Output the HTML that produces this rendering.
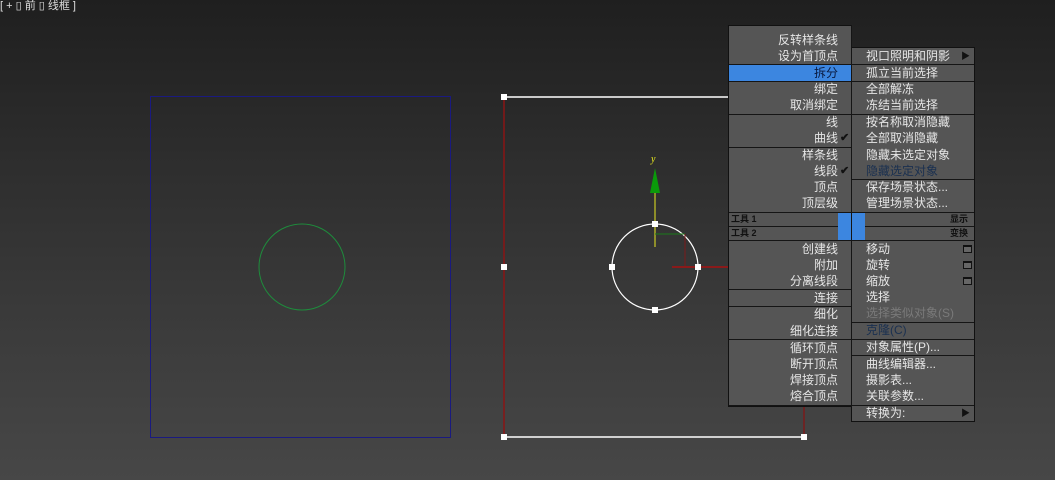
<!DOCTYPE html>
<html><head><meta charset="utf-8"><style>
*{margin:0;padding:0;box-sizing:border-box}
body{width:1055px;height:480px;overflow:hidden;position:relative;background:linear-gradient(#1f1f1f,#2c2c2c 30%,#3a3a3a 65%,#474747);font-family:"Liberation Sans","Noto Sans CJK SC",sans-serif;}
.t{position:absolute;font-size:12px;line-height:16px;color:#e6e6e6;white-space:nowrap}
.l{right:217px;text-align:right}
.r{left:866px}
.p{position:absolute;background:#555;border:1px solid #111}
.s{position:absolute;height:1px;background:#151515}
.hl{position:absolute;background:#3c86e0}
.ck{position:absolute;left:840px;font-size:11px;color:#111;font-weight:bold}
.bx{position:absolute;left:963px;width:9px;height:8px;border:1px solid #111;border-top-width:2px;background:#666}
</style></head><body>
<div class="t" style="left:0;top:-2px;font-size:11px;color:#ddd">[ + ▯ 前 ▯ 线框 ]</div>
<svg width="1055" height="480" style="position:absolute;left:0;top:0">
<rect x="150.5" y="96.5" width="300" height="341" fill="none" stroke="#1a1a80"/>
<circle cx="302" cy="267" r="43" fill="none" stroke="#1e8c3c"/>
<line x1="504" y1="97" x2="729" y2="97" stroke="#fff" stroke-width="1.5"/>
<line x1="504" y1="97" x2="504" y2="437" stroke="#8a1515" stroke-width="1.5"/>
<line x1="804" y1="405" x2="804" y2="437" stroke="#7a1a1a" stroke-width="1.5"/>
<line x1="504" y1="437" x2="804" y2="437" stroke="#fff" stroke-width="1.5"/>
<g fill="#fff"><rect x="501" y="94" width="6" height="6"/><rect x="501" y="264" width="6" height="6"/><rect x="501" y="434" width="6" height="6"/><rect x="801" y="434" width="6" height="6"/></g>
<circle cx="655" cy="267" r="43" fill="none" stroke="#fff" stroke-width="1.2"/>
<line x1="655" y1="190" x2="655" y2="247" stroke="#e8e820"/>
<polygon points="655,168 650,193 660,193" fill="#0a9a0a"/>
<text x="651" y="162" font-size="10" fill="#e8e820" font-family="Liberation Serif" font-style="italic">y</text>
<polyline points="655,234 685,234" stroke="#1a7a1a" fill="none"/>
<polyline points="685,234 685,267" stroke="#7a1a1a" fill="none"/>
<line x1="672" y1="267" x2="729" y2="267" stroke="#8a1a1a" stroke-width="2"/>
<g fill="#fff"><rect x="652" y="221" width="6" height="6"/><rect x="609" y="264" width="6" height="6"/><rect x="695" y="264" width="6" height="6"/><rect x="652" y="307" width="6" height="6"/></g>
</svg>
<div class="p" style="left:728px;top:25px;width:124px;height:382px"></div>
<div class="p" style="left:851px;top:47px;width:124px;height:375px"></div>
<div class="hl" style="left:729px;top:65px;width:122px;height:16px"></div>
<div class="s" style="left:729px;top:64px;width:245px"></div>
<div class="s" style="left:729px;top:81px;width:245px"></div>
<div class="s" style="left:729px;top:114px;width:245px"></div>
<div class="s" style="left:729px;top:147px;width:122px"></div>
<div class="s" style="left:852px;top:179px;width:122px"></div>
<div class="s" style="left:729px;top:212px;width:245px"></div>
<div class="s" style="left:729px;top:226px;width:245px"></div>
<div class="s" style="left:729px;top:240px;width:245px"></div>
<div class="s" style="left:851px;top:25px;width:1px;height:382px"></div>
<div class="hl" style="left:838px;top:213px;width:13px;height:27px"></div>
<div class="hl" style="left:852px;top:213px;width:13px;height:27px"></div>
<div class="t" style="left:731px;top:212px;font-size:9px;line-height:14px;color:#111;font-weight:bold">工具 1</div>
<div class="t" style="left:731px;top:226px;font-size:9px;line-height:14px;color:#111;font-weight:bold">工具 2</div>
<div class="t" style="left:950px;top:212px;font-size:9px;line-height:14px;color:#111;font-weight:bold">显示</div>
<div class="t" style="left:950px;top:226px;font-size:9px;line-height:14px;color:#111;font-weight:bold">变换</div>
<div class="s" style="left:729px;top:289px;width:122px"></div>
<div class="s" style="left:729px;top:306px;width:122px"></div>
<div class="s" style="left:729px;top:339px;width:245px"></div>
<div class="s" style="left:852px;top:322px;width:122px"></div>
<div class="s" style="left:852px;top:355px;width:122px"></div>
<div class="s" style="left:729px;top:405px;width:245px"></div>
<div class="t l" style="top:32px">反转样条线</div>
<div class="t l" style="top:48px">设为首顶点</div>
<div class="t l" style="top:65px;color:#0a1a40">拆分</div>
<div class="t l" style="top:81px">绑定</div>
<div class="t l" style="top:97px">取消绑定</div>
<div class="t l" style="top:114px">线</div>
<div class="t l" style="top:130px">曲线</div><div class="ck t" style="top:130px;color:#111">✔</div>
<div class="t l" style="top:147px">样条线</div>
<div class="t l" style="top:163px">线段</div><div class="ck t" style="top:163px;color:#111">✔</div>
<div class="t l" style="top:179px">顶点</div>
<div class="t l" style="top:195px">顶层级</div>
<div class="t l" style="top:241px">创建线</div>
<div class="t l" style="top:257px">附加</div>
<div class="t l" style="top:273px">分离线段</div>
<div class="t l" style="top:290px">连接</div>
<div class="t l" style="top:306px">细化</div>
<div class="t l" style="top:323px">细化连接</div>
<div class="t l" style="top:340px">循环顶点</div>
<div class="t l" style="top:356px">断开顶点</div>
<div class="t l" style="top:372px">焊接顶点</div>
<div class="t l" style="top:388px">熔合顶点</div>
<div class="t r" style="top:48px">视口照明和阴影</div><div class="t" style="left:961px;top:48px;font-size:9px;color:#111">▶</div>
<div class="t r" style="top:65px">孤立当前选择</div>
<div class="t r" style="top:81px">全部解冻</div>
<div class="t r" style="top:97px">冻结当前选择</div>
<div class="t r" style="top:114px">按名称取消隐藏</div>
<div class="t r" style="top:130px">全部取消隐藏</div>
<div class="t r" style="top:147px">隐藏未选定对象</div>
<div class="t r" style="top:163px;color:#1a3050">隐藏选定对象</div>
<div class="t r" style="top:179px">保存场景状态...</div>
<div class="t r" style="top:195px">管理场景状态...</div>
<div class="t r" style="top:241px">移动</div><div class="bx" style="top:245px"></div>
<div class="t r" style="top:257px">旋转</div><div class="bx" style="top:261px"></div>
<div class="t r" style="top:273px">缩放</div><div class="bx" style="top:277px"></div>
<div class="t r" style="top:289px">选择</div>
<div class="t r" style="top:305px;color:#7a7a7a">选择类似对象(S)</div>
<div class="t r" style="top:322px;color:#1a3050">克隆(C)</div>
<div class="t r" style="top:339px">对象属性(P)...</div>
<div class="t r" style="top:356px">曲线编辑器...</div>
<div class="t r" style="top:372px">摄影表...</div>
<div class="t r" style="top:388px">关联参数...</div>
<div class="t r" style="top:405px">转换为:</div><div class="t" style="left:961px;top:405px;font-size:9px;color:#111">▶</div>
</body></html>
